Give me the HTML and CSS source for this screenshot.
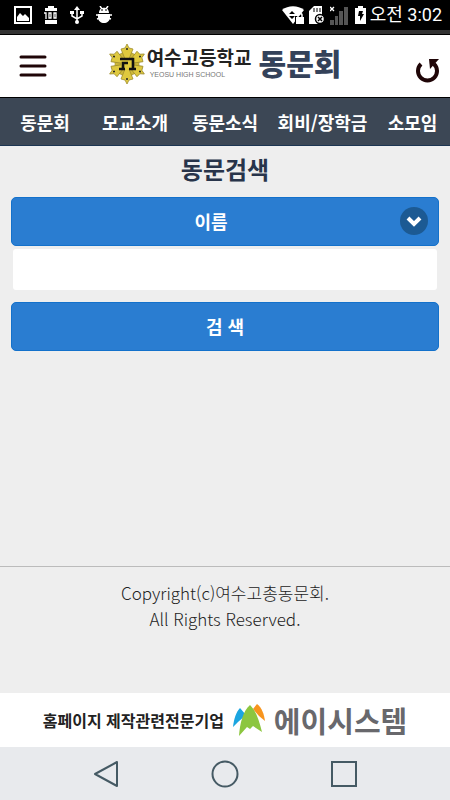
FILE: index.html
```html
<!DOCTYPE html>
<html lang="ko">
  <head>
    <meta charset="UTF-8" />
    <meta name="viewport" content="width=device-width, initial-scale=1.0" />
    <title>여수고등학교 동문회</title>
    <link rel="stylesheet" href="styles.css">
  </head>
  <body>
    <!-- status bar -->
    <div class="status-bar">
      <div class="status-left">
        <svg width="18" height="18" viewBox="0 0 18 18">
          <path d="M1 1h16v16H1z" fill="none" stroke="#fff" stroke-width="2" />
          <path d="M3 15V11l3-4 3 3 2-2 4 4v3z" fill="#fff" />
        </svg>
        <svg width="14" height="18" viewBox="0 0 14 18">
          <path d="M4 0h6v2h3v3H1V2h3zM1 14h12v4H1z" fill="#fff" />
          <path d="M0 7h2v6M5 7h2v5H5zM10 7h2v5h-2z" fill="none" stroke="#fff" stroke-width="1.300" />
        </svg>
        <svg width="14" height="18" viewBox="0 0 14 18">
          <path d="M7 3v13M2 6v4l5 3 5-3V6" fill="none" stroke="#fff" stroke-width="1.500" />
          <path d="M7 0l3 4H4zM0 5h4v3H0zM10 5h4v3h-4z" fill="#fff" />
          <circle cx="7" cy="16" r="2" fill="#fff" />
        </svg>
        <svg width="16" height="18" viewBox="0 0 16 18">
          <path d="M3 7c0-7 10-7 10 0zM2 8h12v3c0 8-12 8-12 0z" fill="#fff" />
          <path d="M4 0l2 3M12 0l-2 3M0 9h16M1 13l3-1M15 13l-3-1" stroke="#fff" stroke-width="1.500" />
          <path d="M5 4h2M9 4h2" stroke="#000" />
        </svg>
      </div>
      <div class="status-right">
        <svg width="23" height="18" viewBox="0 0 23 18">
          <path d="M0 4C6-1 16-1 22 4L11 18z" fill="#fff" />
          <path d="M7 8l3-3 3 3zM7 10h6l-3 3z" fill="#000" />
          <path d="M13 10h9v8h-9z" fill="#000" />
          <path d="M14 11h8v7h-8z" fill="#fff" />
          <path d="M16 12V9c0-2 4-2 4 0v3" fill="none" stroke="#fff" stroke-width="1.500" />
        </svg>
        <svg width="17" height="19" viewBox="0 0 17 19">
          <path d="M5 0h8v18H0V5z" fill="#fff" />
          <path d="M5 2v4M8 2v4M11 2v4" stroke="#000" />
          <circle cx="11" cy="13" r="4.500" fill="#fff" stroke="#000" stroke-width="1.500" />
          <path d="M9 11l4 4M13 11l-4 4" stroke="#000" stroke-width="1.500" />
        </svg>
        <svg width="18" height="19" viewBox="0 0 18 19">
          <path d="M0 14h4v5H0zM5 10h3v9H5zM9 5h4v14H9zM14 1h4v18h-4z" fill="#555" />
          <path d="M0 1l4 4M4 1L0 5" stroke="#fff" stroke-width="1.300" />
        </svg>
        <svg class="battery" width="11" height="18" viewBox="0 0 11 18">
          <path d="M3 0h5v2h3v16H0V2h3z" fill="#fff" />
          <path d="M4 5h4L7 8h2l-4 7V10H3z" fill="#000" />
        </svg>
        <span>오전 3:02</span>
      </div>
    </div>

    <header class="header">
      <button class="icon-btn" type="button" aria-label="메뉴">
        <svg width="28" height="24" viewBox="0 0 28 24">
          <path d="M2 3h24M2 12h24M2 21h24" stroke="#1f0507" stroke-width="3" stroke-linecap="round" />
        </svg>
      </button>
      <a href="#" class="logo">
        <svg width="38" height="40" viewBox="0 0 38 40">
          <defs>
            <path id="ray" d="M19 20l-3-12h6z" fill="#cdb838" stroke="#a08e30" stroke-width="0.600" />
            <g id="petal">
              <path d="M19 20L13 5l4-1 2-4 2 4 4 1z" fill="#dfc93e" stroke="#a08e30" stroke-width="0.800" />
              <circle cx="19" cy="5" r="1" fill="#222" />
            </g>
          </defs>
          <use href="#ray" transform="rotate(30 19 20)" />
          <use href="#ray" transform="rotate(90 19 20)" />
          <use href="#ray" transform="rotate(150 19 20)" />
          <use href="#ray" transform="rotate(210 19 20)" />
          <use href="#ray" transform="rotate(270 19 20)" />
          <use href="#ray" transform="rotate(330 19 20)" />
          <use href="#petal" />
          <use href="#petal" transform="rotate(60 19 20)" />
          <use href="#petal" transform="rotate(120 19 20)" />
          <use href="#petal" transform="rotate(180 19 20)" />
          <use href="#petal" transform="rotate(240 19 20)" />
          <use href="#petal" transform="rotate(300 19 20)" />
          <path d="M13 14h12v11H13z" fill="#dfc93e" />
          <path d="M12 15h13v10M15 25v-6h5M11 25h6M21 25h7" fill="none" stroke="#111" stroke-width="2.600" />
        </svg>
        <span class="school">
          <strong>여수고등학교</strong>
          <small>YEOSU HIGH SCHOOL</small>
        </span>
        <span class="club">동문회</span>
      </a>
      <button class="icon-btn reload" type="button" aria-label="새로고침">
        <svg width="24" height="24" viewBox="0 0 24 24">
          <path d="M5 5a9.500 9.500 0 1 0 13 0" fill="none" stroke="#1f0507" stroke-width="4" />
          <path d="M13 0h10l-9 10z" fill="#1f0507" />
        </svg>
      </button>
    </header>

    <nav class="nav">
      <a href="#">동문회</a>
      <a href="#">모교소개</a>
      <a href="#">동문소식</a>
      <a href="#">회비/장학금</a>
      <a href="#">소모임</a>
    </nav>

    <main class="content">
      <h1>동문검색</h1>
      <form class="search-form">
        <div class="select-wrap">
          <select aria-label="검색 구분">
            <option>이름</option>
          </select>
          <svg class="arrow" width="28" height="28" viewBox="0 0 28 28">
            <circle cx="14" cy="14" r="14" fill="#1c5a93" />
            <path d="M8 11l6 6 6-6" fill="none" stroke="#fff" stroke-width="4" />
          </svg>
        </div>
        <input type="text" aria-label="검색어" />
        <button type="submit">검 색</button>
      </form>
    </main>

    <footer class="footer">
      <p>Copyright(c)여수고총동문회.<br />All Rights Reserved.</p>
    </footer>

    <a href="#" class="banner">
      <strong>홈페이지 제작관련전문기업</strong>
      <svg width="34" height="32" viewBox="0 0 34 32">
        <path d="M1 23C2 15 4 8 8 4l6 7-8 7z" fill="#1ba5e0" />
        <path d="M21 5l4-5c5 4 7 10 8 17l-6-5z" fill="#f7941d" />
        <path d="M7 32C8 19 11 7 18 1c6 6 9 15 12 27l-9-6-3 3-3-2z" fill="#8cc63f" />
      </svg>
      <span>에이시스템</span>
    </a>

    <!-- system buttons -->
    <div class="system-bar">
      <button type="button" aria-label="뒤로">
        <svg width="28" height="28" viewBox="0 0 28 28">
          <path d="M25 2v24L3 14z" fill="none" stroke="#455a64" stroke-width="2" stroke-linejoin="round" />
        </svg>
      </button>
      <button type="button" aria-label="홈">
        <svg width="28" height="28" viewBox="0 0 28 28">
          <circle cx="14" cy="14" r="12.500" fill="none" stroke="#455a64" stroke-width="2" />
        </svg>
      </button>
      <button type="button" aria-label="최근 앱">
        <svg width="28" height="28" viewBox="0 0 28 28">
          <path d="M2 2h24v24H2z" fill="none" stroke="#455a64" stroke-width="2" />
        </svg>
      </button>
    </div>
  </body>
</html>
```
FILE: styles.css
```css
:root {
  --blue: #2a7dd1;
  --navy: #3c4755;
}
* {
  box-sizing: border-box;
}
body {
  background-color: #eee;
  font-family: "Noto Sans CJK KR", sans-serif;
  display: flex;
  flex-direction: column;
  min-height: 100vh;
  margin: 0;
}

a {
  text-decoration: none;
}

svg {
  display: block;
  flex-shrink: 0;
}

button {
  cursor: pointer;
  font-family: inherit;
}

.status-bar {
  background-color: #000;
  border-bottom: 4px solid #333;
  color: #fff;
  display: flex;
  align-items: center;
  justify-content: space-between;
  height: 34px;
  padding: 0 8px 0 14px;
}

.status-left {
  display: flex;
  gap: 12px;
}

.status-right {
  display: flex;
  align-items: center;
  gap: 4px;
  font-family: Roboto, "Noto Sans CJK KR", sans-serif;
  font-size: 18px;
  line-height: 24px;
}

.status-right .battery {
  margin-left: 3px;
}

.status-right span {
  white-space: nowrap;
}

.header {
  background-color: #fff;
  border-top: 1px solid #000;
  border-bottom: 1px solid #000;
  display: flex;
  align-items: center;
  justify-content: space-between;
  height: 64px;
  padding: 0 10px 0 19px;
}

.icon-btn {
  background: none;
  border: 0;
  padding: 0;
}

.reload {
  padding-top: 10px;
}

.logo {
  display: flex;
  align-items: center;
  padding-bottom: 4px;
  margin-right: 14px;
}

.school {
  display: flex;
  flex-direction: column;
  color: #222;
  margin: 0 7px 0 1px;
}

.school strong {
  font-size: 19px;
  font-weight: 700;
  line-height: 22px;
}

.school small {
  color: #777;
  font-family: "Liberation Sans", sans-serif;
  font-size: 7px;
  line-height: 14px;
  padding-left: 3px;
}

.club {
  color: #34425a;
  font-size: 30px;
  font-weight: 900;
  line-height: 36px;
  padding-bottom: 4px;
}

.nav {
  background-color: var(--navy);
  border-bottom: 1px solid #1c3552;
  display: grid;
  grid-template-columns: 6fr 6fr 6fr 7fr 5fr;
  align-items: center;
  height: 48px;
}

.nav a {
  color: #fff;
  font-size: 18px;
  font-weight: 700;
  text-align: center;
  white-space: nowrap;
}

.content {
  flex: 1;
  padding: 6px 11px;
}

h1 {
  color: #28344a;
  font-size: 24px;
  font-weight: 700;
  line-height: 34px;
  text-align: center;
  margin: 0 0 11px;
}

.select-wrap {
  position: relative;
}

.search-form select,
.search-form button {
  appearance: none;
  background-color: var(--blue);
  border: 1px solid #1371cb;
  border-radius: 5px;
  color: #fff;
  display: block;
  font-family: inherit;
  font-size: 18px;
  font-weight: 700;
  height: 49px;
  padding: 0 0 2px;
  text-align: center;
  text-align-last: center;
  width: 100%;
}

.select-wrap select {
  padding-right: 28px;
}

.arrow {
  position: absolute;
  top: 10px;
  right: 11px;
  pointer-events: none;
}

.search-form input {
  background-color: #fff;
  border: 0;
  border-radius: 3px;
  display: block;
  font-size: 18px;
  height: 41px;
  margin: 3px 2px 12px;
  padding: 0 10px;
  width: calc(100% - 4px);
}

.footer {
  border-top: 1px solid #bbb;
  color: #222;
  font-size: 17px;
  font-weight: 300;
  line-height: 26px;
  min-height: 127px;
  padding: 13px 0;
  text-align: center;
}

.footer p {
  margin: 0;
}

.banner {
  background-color: #fff;
  color: #222;
  display: flex;
  align-items: center;
  justify-content: center;
  gap: 8px;
  height: 54px;
}

.banner strong {
  font-size: 16px;
  font-weight: 700;
}

.banner span {
  color: #68686c;
  font-size: 29px;
  font-weight: 700;
  line-height: 36px;
}

.system-bar {
  background-color: #e8eaed;
  display: flex;
  align-items: center;
  justify-content: center;
  gap: 91px;
  height: 53px;
}

.system-bar button {
  background: none;
  border: 0;
  padding: 0;
}
```
